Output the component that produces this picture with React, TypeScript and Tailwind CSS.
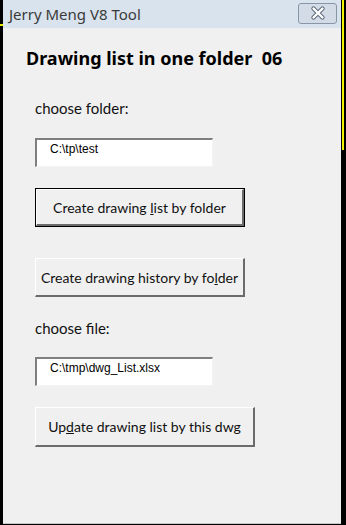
import React from 'react';

const ui = { fontFamily: '"Noto Sans", "Open Sans", sans-serif' };
const body = { fontFamily: 'Lato, "Noto Sans", sans-serif' };
const small = { fontFamily: '"Liberation Sans", Arial, sans-serif' };

function PathBox({ value }: { value: string })
{
    return (
        <div
            className="w-[178px] h-[29px] bg-white border-t-2 border-l-2 border-b border-r border-t-[#7f7f7f] border-l-[#7f7f7f] border-b-[#f4f4f4] border-r-[#f4f4f4] pl-[13px] pt-[2px] text-[12px] leading-[14px] text-black whitespace-nowrap"
            style={small}
        >
            {value}
        </div>
    );
}

function Button({ width, isDefault, children }: { width: string; isDefault?: boolean; children: React.ReactNode })
{
    return (
        <div className={`${width} ${isDefault ? 'border border-black' : ''}`}>
            <div className="h-full flex items-center justify-center bg-[#f0f0f0] border-t border-l border-white border-b-2 border-r-2 border-b-[#6b6b6b] border-r-[#6b6b6b] text-[14px] text-[#111] whitespace-nowrap">
                <span style={body}>{children}</span>
            </div>
        </div>
    );
}

function CloseIcon()
{
    return (
        <svg width="20" height="16" viewBox="0 0 20 16">
            <path d="M5.5 3.5 L14.5 12.5 M14.5 3.5 L5.5 12.5" stroke="#5d6b7b" strokeWidth="4.4" strokeLinecap="round" />
            <path d="M5.5 3.5 L14.5 12.5 M14.5 3.5 L5.5 12.5" stroke="#ffffff" strokeWidth="2.4" strokeLinecap="round" />
        </svg>
    );
}

export default function App()
{
    return (
        <div className="w-[346px] h-[525px] bg-black flex overflow-hidden">
            <div className="w-[3px] shrink-0 flex flex-col">
                <div className="h-[24px]" />
                <div className="h-[2px] bg-[#e8e800]" />
            </div>

            <div className="w-[338px] shrink-0 flex flex-col h-[524px] bg-[#f0f0f0] border-b border-[#c8c8c8]">
                {/* title bar */}
                <div className="h-[28px] shrink-0 flex items-center justify-between pl-[6px] pr-[4px] bg-[#d9e3ee]">
                    <span className="text-[15px] text-[#3a3a3a] leading-none" style={ui}>Jerry Meng V8 Tool</span>
                    <div className="w-[39px] h-[21px] -mt-[2px] rounded-[3px] border border-[#8795a6] bg-[#d3dce6] flex items-center justify-center">
                        <CloseIcon />
                    </div>
                </div>

                {/* body */}
                <div className="flex flex-col pl-[23px]">
                    <div className="mt-[18px] h-[24px] leading-[24px] text-[18px] font-bold text-black whitespace-pre" style={ui}>
                        Drawing list in one folder  06
                    </div>

                    <div className="pl-[9px] flex flex-col">
                        <div className="mt-[28px] h-[20px] leading-[20px] text-[15px] text-[#111]" style={body}>choose folder:</div>
                        <div className="mt-[20px]"><PathBox value={'C:\\tp\\test'} /></div>
                        <div className="mt-[21px] h-[39px] flex">
                            <Button width="w-[210px]" isDefault>
                                Create drawing <span className="underline">l</span>ist by folder
                            </Button>
                        </div>
                        <div className="mt-[31px] h-[39px] flex">
                            <Button width="w-[210px]">
                                Create drawing history by fo<span className="underline">l</span>der
                            </Button>
                        </div>
                        <div className="mt-[21px] h-[20px] leading-[20px] text-[15px] text-[#111]" style={body}>choose file:</div>
                        <div className="mt-[19px]"><PathBox value={'C:\\tmp\\dwg_List.xlsx'} /></div>
                        <div className="mt-[21px] h-[40px] flex">
                            <Button width="w-[220px]">
                                Up<span className="underline">d</span>ate drawing list by this dwg
                            </Button>
                        </div>
                    </div>
                </div>
            </div>

            <div className="flex-1 flex">
                <div className="w-[1px]" />
                <div className="w-[2px] h-[150px] bg-[#f2f200]" />
            </div>
        </div>
    );
}
